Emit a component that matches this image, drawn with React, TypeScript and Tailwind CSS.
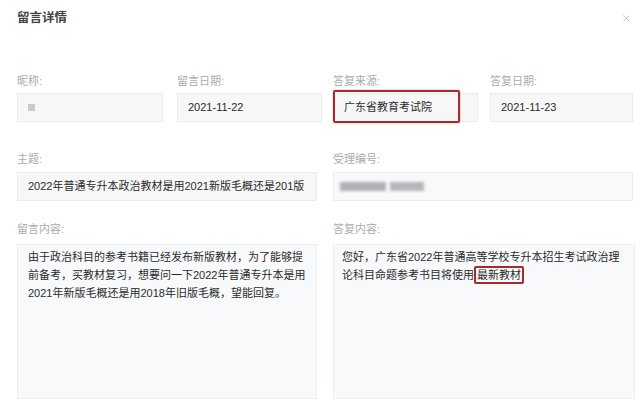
import React from 'react';
import { X } from 'lucide-react';

const font = { fontFamily: '"Liberation Sans", "Noto Sans CJK SC", sans-serif' };

const Label: React.FC<{ children: React.ReactNode }> = ({ children }) => (
  <div className="h-[13px] text-[11px] leading-[13px] text-[#ababab]">{children}</div>
);

const Field: React.FC<{ className?: string; children?: React.ReactNode }> = ({ className = '', children }) => (
  <div className={`h-[29px] bg-[#f7f7f8] border border-[#ebebeb] px-[10px] flex items-center text-[11px] text-[#2b2b2b] overflow-hidden whitespace-nowrap ${className}`}>
    {children}
  </div>
);

const App: React.FC = () => {
  return (
    <div className="w-[644px] h-[410px] bg-white relative overflow-hidden" style={font}>
      <div className="flex items-center justify-between pl-[17px] pr-[12px] pt-[11px] h-[26px]">
        <h2 className="text-[12.5px] font-bold text-[#444] leading-[15px]">留言详情</h2>
        <X className="w-[11px] h-[11px] text-[#b0b0b0]" strokeWidth={1.5} />
      </div>

      <div className="pl-[17px] pt-[49px]">
        {/* row 1 */}
        <div className="flex">
          <div className="w-[146px]">
            <Label>昵称:</Label>
            <Field className="mt-[5px]">
              <span className="w-[7px] h-[7px] bg-[#cbcbcb]" />
            </Field>
          </div>
          <div className="w-[145px] ml-[14px]">
            <Label>留言日期:</Label>
            <Field className="mt-[5px]">2021-11-22</Field>
          </div>
          <div className="w-[145px] ml-[11px] relative">
            <Label>答复来源:</Label>
            <Field className="mt-[5px]">广东省教育考试院</Field>
            <div className="absolute left-0 top-[15px] w-[127px] h-[33px] border-2 border-[#a8292c] rounded-[2px] shadow-[0_0_2px_rgba(168,41,44,0.5)]" />
          </div>
          <div className="w-[143px] ml-[12px]">
            <Label>答复日期:</Label>
            <Field className="mt-[5px]">2021-11-23</Field>
          </div>
        </div>

        {/* row 2 */}
        <div className="flex mt-[31px]">
          <div className="w-[300px]">
            <Label>主题:</Label>
            <Field className="mt-[6px] h-[28px]">2022年普通专升本政治教材是用2021新版毛概还是201版</Field>
          </div>
          <div className="w-[300px] ml-[16px]">
            <Label>受理编号:</Label>
            <Field className="mt-[6px] h-[28px] bg-[#f8f9fb]">
              <div className="flex gap-[4px] ml-[-4px] blur-[1.5px]">
                <span className="w-[46px] h-[9px] bg-[#aeb1b5]" />
                <span className="w-[34px] h-[9px] bg-[#b5b7bb]" />
              </div>
            </Field>
          </div>
        </div>

        {/* row 3 */}
        <div className="flex mt-[22px]">
          <div className="w-[300px]">
            <Label>留言内容:</Label>
            <div className="mt-[8px] h-[155px] bg-[#f8f9fb] border border-[#eceef0] px-[10px] pt-[3px] text-[11px] leading-[18px] text-[#2b2b2b] whitespace-nowrap">
              <div>由于政治科目的参考书籍已经发布新版教材，为了能够提</div>
              <div>前备考，买教材复习，想要问一下2022年普通专升本是用</div>
              <div>2021年新版毛概还是用2018年旧版毛概，望能回复。</div>
            </div>
          </div>
          <div className="w-[302px] ml-[16px]">
            <Label>答复内容:</Label>
            <div className="mt-[8px] h-[155px] bg-[#f8f9fb] border border-[#eceef0] px-[8px] pt-[3px] text-[11px] leading-[18px] text-[#2b2b2b] whitespace-nowrap">
              <div>您好，广东省2022年普通高等学校专升本招生考试政治理</div>
              <div>
                论科目命题参考书目将使用
                <span className="inline-block border-2 border-[#a8292c] rounded-[2px] leading-[14px] px-[1px]">最新教材</span>
              </div>
            </div>
          </div>
        </div>
      </div>
    </div>
  );
};

export default App;
